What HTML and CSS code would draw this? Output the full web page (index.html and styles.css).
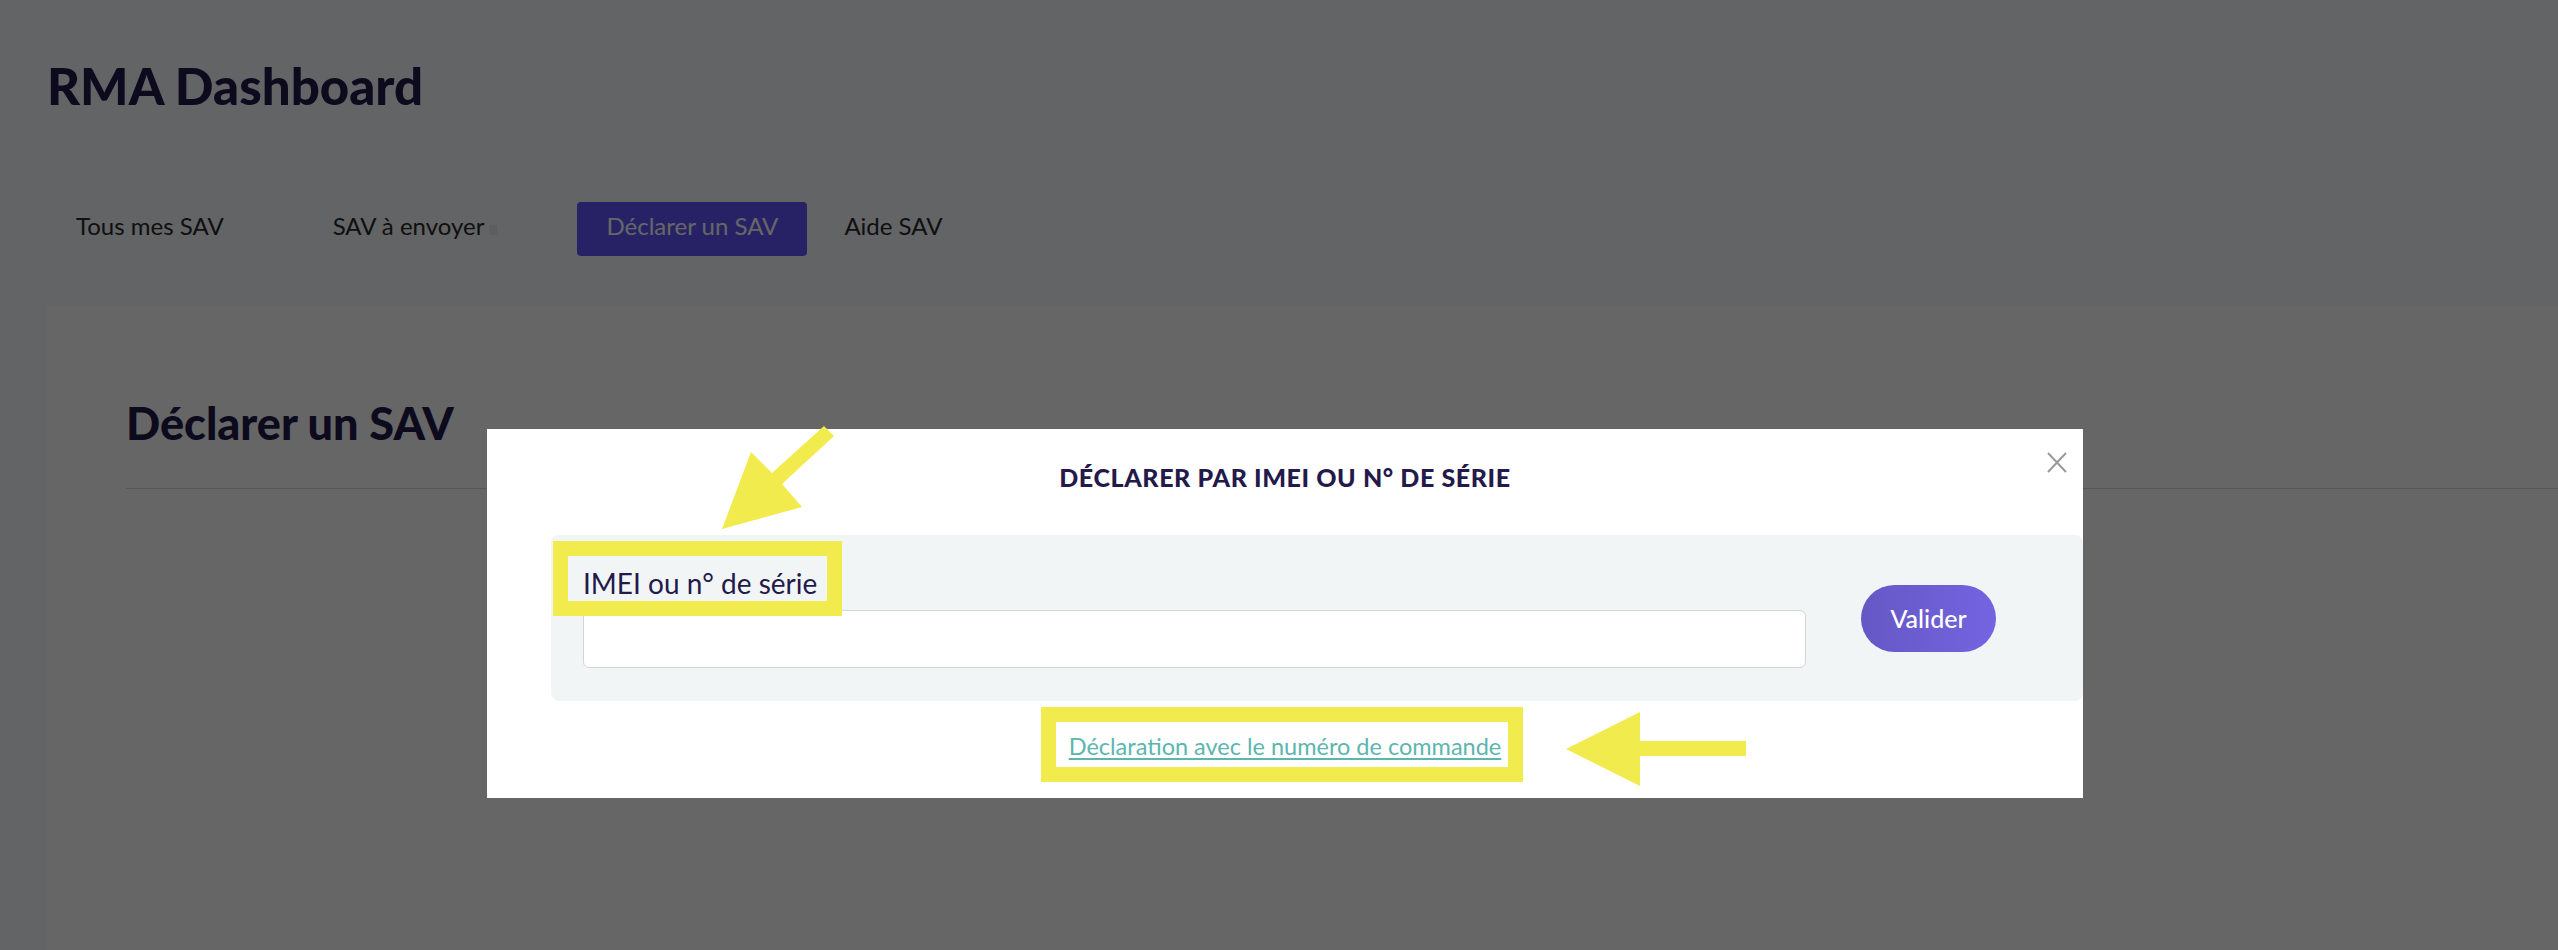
FILE: index.html
```html
<!DOCTYPE html>
<html lang="fr">
  <head>
    <meta charset="utf-8">
    <title>RMA Dashboard</title>
    <link rel="stylesheet" href="styles.css">
  </head>
  <body>
    <header class="top">
      <h1 class="brand">RMA Dashboard</h1>
      <nav class="tabs">
        <a class="tab" href="#">Tous mes SAV</a>
        <a class="tab" href="#">SAV à envoyer<span class="tab-count"></span></a>
        <a class="tab tab-active" href="#">Déclarer un SAV</a>
        <a class="tab" href="#">Aide SAV</a>
      </nav>
    </header>

    <main class="panel">
      <h2 class="panel-title">Déclarer un SAV</h2>
      <hr class="panel-rule">
    </main>

    <!-- modal: declare by IMEI / serial number -->
    <div class="backdrop">
      <div class="modal">
        <button class="modal-close" type="button" aria-label="Fermer">
          <svg viewBox="0 0 20 21" width="20" height="21">
            <path d="M1 1 L19 20 M19 1 L1 20" stroke="#9a9a9a" stroke-width="2" fill="none"/>
          </svg>
        </button>
        <h3 class="modal-title">DÉCLARER PAR IMEI OU N° DE SÉRIE</h3>
        <form class="lookup">
          <div class="lookup-field">
            <label class="lookup-label" for="serial">IMEI ou n° de série</label>
            <input class="lookup-input" id="serial" type="text">
          </div>
          <button class="lookup-submit" type="button">Valider</button>
        </form>
        <p class="modal-alt"><a href="#">Déclaration avec le numéro de commande</a></p>
      </div>
    </div>

    <!-- highlight marks -->
    <svg class="marks" viewBox="0 0 2558 950" width="2558" height="950">
      <g fill="#f2eb4e">
        <polygon points="722,529 751,452 772,473 824,426 834,436 782,484 802,507"/>
        <polygon points="1566,749 1640,712 1640,741 1746,741 1746,756 1640,756 1640,786"/>
      </g>
      <g fill="none" stroke="#f2eb4e" stroke-width="15">
        <rect x="560.5" y="548.5" width="274" height="60"/>
        <rect x="1048.5" y="714.5" width="467" height="60"/>
      </g>
    </svg>
  </body>
</html>
```

FILE: styles.css
```css
body {
  margin: 0;
  min-height: 100vh;
  display: flex;
  flex-direction: column;
  background-color: #f8f9fe;
  color: #22194a;
  font-family: "Lato", "Liberation Sans", sans-serif;
  overflow: hidden;
}

.brand {
  margin: 55px 0 0 47px;
  font-size: 51px;
  line-height: 1.2;
  font-weight: 900;
  color: #22194a;
}

.tabs {
  display: flex;
  align-items: flex-start;
  margin: 86px 0 50px;
  padding-left: 47px;
}

.tab {
  display: block;
  padding: 10px 29px 16px;
  margin-right: 51px;
  font-size: 24px;
  line-height: 28px;
  color: #2a2a2a;
  text-decoration: none;
  border-radius: 4px;
}

.tab-count {
  display: inline-block;
  width: 8px;
  height: 10px;
  margin-left: 5px;
  border-radius: 2px;
  background-color: #ececf0;
}

.tab-active {
  background-color: #6156ff;
  color: #fff;
  margin-right: 8px;
}

.panel {
  flex: 1;
  margin-left: 46px;
  padding: 90px 0 0 80px;
  background-color: #fff;
}

.panel-title {
  margin: 0;
  font-size: 45px;
  line-height: 1.2;
  font-weight: 900;
  color: #22194a;
}

.panel-rule {
  margin: 38px 0 0;
  border: 0;
  border-top: 1px solid #d4d4d4;
}

/* modal */

.backdrop {
  position: fixed;
  inset: 0;
  background-color: rgba(0, 0, 0, 0.6);
  padding: 429px 0 0 487px;
}

.modal {
  position: relative;
  width: 1596px;
  box-sizing: border-box;
  padding: 34px 0 38px;
  background-color: #fff;
}

.modal-close {
  position: absolute;
  top: 23px;
  right: 16px;
  padding: 0;
  border: 0;
  background: none;
  width: 20px;
  height: 21px;
}

.modal-close svg {
  display: block;
}

.modal-title {
  margin: 0;
  font-size: 25px;
  line-height: 29px;
  font-weight: 900;
  letter-spacing: 0.6px;
  text-align: center;
  color: #231a4b;
}

.lookup {
  display: flex;
  align-items: center;
  gap: 55px;
  margin: 43px 0 0 64px;
  padding: 33px 87px 33px 32px;
  background-color: #f2f5f6;
  border-radius: 8px;
}

.lookup-field {
  flex: 1;
}

.lookup-label {
  display: block;
  font-size: 28px;
  line-height: 31px;
  color: #231a4b;
}

.lookup-input {
  display: block;
  width: 100%;
  height: 58px;
  box-sizing: border-box;
  margin-top: 11px;
  border: 1px solid #d0d5db;
  border-radius: 6px;
  background-color: #fff;
}

.lookup-submit {
  width: 135px;
  height: 67px;
  border: 0;
  border-radius: 34px;
  background: linear-gradient(90deg, #6558c4, #7464e1);
  color: #fff;
  font-family: inherit;
  font-size: 25px;
  font-weight: 500;
}

.modal-alt {
  margin: 31px 0 0;
  text-align: center;
  font-size: 23.5px;
  line-height: 28px;
}

.modal-alt a {
  color: #5cb6ad;
  text-decoration: underline;
  text-decoration-thickness: 2px;
  text-underline-offset: 3px;
}

.marks {
  position: absolute;
  top: 0;
  left: 0;
  pointer-events: none;
}
```
